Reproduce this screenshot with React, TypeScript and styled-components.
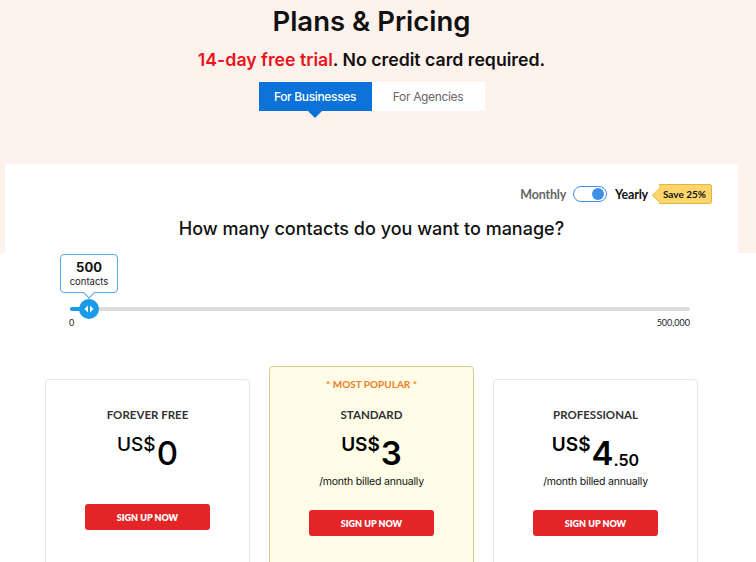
import React from 'react'
import styled, { createGlobalStyle } from 'styled-components'

const GlobalStyle = createGlobalStyle`
    body {
        margin: 0;
        background: #ffffff;
        font-family: Inter, 'Noto Sans', sans-serif;
        color: #111;
    }
`

type Plan = {
    name: string
    price: string
    cents?: string
    note?: string
    popular?: boolean
}

const plans: Plan[] = [
    { name: 'FOREVER FREE', price: '0' },
    { name: 'STANDARD', price: '3', note: '/month billed annually', popular: true },
    { name: 'PROFESSIONAL', price: '4', cents: '.50', note: '/month billed annually' },
]

const thumbX = 19

export default function App() {
    return (
        <>
            <GlobalStyle />
            <Hero>
                <Title>Plans &amp; Pricing</Title>
                <Subtitle>
                    <Red>14-day free trial</Red>. No credit card required.
                </Subtitle>
                <Tabs>
                    <Tab $active>For Businesses</Tab>
                    <Tab>For Agencies</Tab>
                </Tabs>
            </Hero>
            <Panel>
                <BillingRow>
                    <BillingLabel>Monthly</BillingLabel>
                    <Toggle>
                        <Knob />
                    </Toggle>
                    <BillingLabel $active>Yearly</BillingLabel>
                    <Badge>Save 25%</Badge>
                </BillingRow>
                <Question>How many contacts do you want to manage?</Question>
                <Slider>
                    <Bubble style={{ left: thumbX - 29 }}>
                        <BubbleValue>500</BubbleValue>
                        <BubbleUnit>contacts</BubbleUnit>
                    </Bubble>
                    <Track>
                        <Fill style={{ width: thumbX }} />
                        <Thumb style={{ left: thumbX - 10 }}>
                            <svg width="10" height="8" viewBox="0 0 10 8">
                                <path d="M4 0.5 L0.5 4 L4 7.5 Z" fill="#fff" />
                                <path d="M6 0.5 L9.5 4 L6 7.5 Z" fill="#fff" />
                            </svg>
                        </Thumb>
                    </Track>
                    <Scale>
                        <span>0</span>
                        <span>500,000</span>
                    </Scale>
                </Slider>
                <Cards>
                    {plans.map((p) => (
                        <Card key={p.name} $popular={p.popular}>
                            {p.popular && <Popular>* MOST POPULAR *</Popular>}
                            <PlanName>{p.name}</PlanName>
                            <Price $light={!p.popular && !p.cents}>
                                <Currency>US$</Currency>
                                <Amount>{p.price}</Amount>
                                {p.cents && <Cents>{p.cents}</Cents>}
                            </Price>
                            {p.note && <Note>{p.note}</Note>}
                            <SignUp $gap={p.note ? 21 : 34}>SIGN UP NOW</SignUp>
                        </Card>
                    ))}
                </Cards>
            </Panel>
        </>
    )
}

const Hero = styled.div`
    background: #fdf3ec;
    height: 253px;
    padding: 4px 13px 0 0;
    box-sizing: border-box;
    display: flex;
    flex-direction: column;
    align-items: center;
`

const Title = styled.h1`
    margin: 0;
    font-size: 27.5px;
    line-height: 34px;
    font-weight: 600;
    color: #111;
`

const Subtitle = styled.div`
    margin-top: 10px;
    font-size: 17.7px;
    line-height: 24px;
    font-weight: 600;
    color: #111;
`

const Red = styled.span`
    color: #e8141c;
`

const Tabs = styled.div`
    margin-top: 10px;
    display: flex;
`

const Tab = styled.div<{ $active?: boolean }>`
    position: relative;
    width: 113px;
    height: 29px;
    display: flex;
    align-items: center;
    justify-content: center;
    font-size: 12px;
    letter-spacing: -0.35px;
    font-weight: ${(p) => (p.$active ? 500 : 400)};
    background: ${(p) => (p.$active ? '#0a72d8' : '#ffffff')};
    color: ${(p) => (p.$active ? '#ffffff' : '#666')};

    ${(p) =>
        p.$active
            ? `&::after {
        content: '';
        position: absolute;
        left: 50%;
        bottom: -7px;
        margin-left: -7px;
        border-left: 7px solid transparent;
        border-right: 7px solid transparent;
        border-top: 7px solid #0a72d8;
    }`
            : ''}
`

const Panel = styled.div`
    margin: -89px 18px 0 5px;
    background: #ffffff;
    padding: 20px 0 0;
`

const BillingRow = styled.div`
    display: flex;
    justify-content: flex-end;
    align-items: center;
    padding-right: 26px;
    height: 20px;
    font-family: Lato, sans-serif;
`

const BillingLabel = styled.span<{ $active?: boolean }>`
    font-size: 12.5px;
    font-weight: 700;
    letter-spacing: -0.2px;
    color: ${(p) => (p.$active ? '#111' : '#666')};
`

const Toggle = styled.div`
    width: 28px;
    height: 14px;
    margin: 0 8px 0 7px;
    border: 1px solid #3f8fe0;
    border-radius: 9px;
    display: flex;
    align-items: center;
    justify-content: flex-end;
    padding: 0 2px;
`

const Knob = styled.div`
    width: 12px;
    height: 12px;
    border-radius: 50%;
    background: #3f8fe6;
`

const Badge = styled.span`
    position: relative;
    z-index: 0;
    margin-left: 11px;
    height: 18px;
    padding: 0 5px 0 4px;
    display: flex;
    align-items: center;
    font-size: 10px;
    font-weight: 700;
    color: #111;
    background: #fcd66b;
    border: 1px solid #e6b446;
    border-left: none;
    border-radius: 0 3px 3px 0;

    &::before {
        content: '';
        position: absolute;
        left: -6px;
        top: 2px;
        width: 13px;
        height: 13px;
        background: #fcd66b;
        border-left: 1px solid #e6b446;
        border-bottom: 1px solid #e6b446;
        border-radius: 0 0 0 2px;
        transform: rotate(45deg) scale(0.72, 1);
        transform-origin: center;
        z-index: -1;
    }
`

const Question = styled.h2`
    margin: 13px 0 0;
    text-align: center;
    font-size: 18px;
    line-height: 24px;
    font-weight: 500;
    color: #111;
`

const Slider = styled.div`
    position: relative;
    margin: 13px 48px 0 65px;
    padding-top: 53px;
`

const Bubble = styled.div`
    position: absolute;
    top: 0;
    width: 56px;
    height: 37px;
    border: 1px solid #5aa7dd;
    border-radius: 4px;
    background: #fff;
    display: flex;
    flex-direction: column;
    align-items: center;
    justify-content: center;

    &::after {
        content: '';
        position: absolute;
        bottom: -5px;
        left: 50%;
        margin-left: -4px;
        width: 7px;
        height: 7px;
        background: #fff;
        border-right: 1px solid #5aa7dd;
        border-bottom: 1px solid #5aa7dd;
        transform: rotate(45deg);
    }
`

const BubbleValue = styled.span`
    font-size: 13px;
    line-height: 16px;
    font-weight: 700;
`

const BubbleUnit = styled.span`
    font-size: 9.5px;
    line-height: 13px;
    color: #222;
`

const Track = styled.div`
    position: relative;
    height: 4px;
    border-radius: 2px;
    background: #dcdcdc;
`

const Fill = styled.div`
    position: absolute;
    left: 0;
    top: 0;
    height: 4px;
    border-radius: 2px;
    background: #1a9ae8;
`

const Thumb = styled.div`
    position: absolute;
    top: -8px;
    width: 20px;
    height: 20px;
    border-radius: 50%;
    background: #1a9ae8;
    display: flex;
    align-items: center;
    justify-content: center;
`

const Scale = styled.div`
    margin-top: 6px;
    margin-left: -1px;
    display: flex;
    justify-content: space-between;
    font-family: Lato, sans-serif;
    font-size: 9px;
    line-height: 11px;
    color: #222;
`

const Cards = styled.div`
    margin-top: 38px;
    display: flex;
    justify-content: center;
    align-items: flex-start;
    gap: 19px;
`

const Card = styled.div<{ $popular?: boolean }>`
    width: 205px;
    min-height: 210px;
    box-sizing: border-box;
    margin-top: ${(p) => (p.$popular ? '0' : '13px')};
    padding-top: ${(p) => (p.$popular ? '10px' : '27px')};
    background: ${(p) => (p.$popular ? '#fffde8' : '#fff')};
    border: 1px solid ${(p) => (p.$popular ? '#dccb8a' : '#e6e6e6')};
    border-radius: 4px;
    display: flex;
    flex-direction: column;
    align-items: center;
`

const Popular = styled.div`
    font-family: Lato, sans-serif;
    font-size: 10px;
    line-height: 14px;
    font-weight: 700;
    color: #f07c1c;
    margin-bottom: 16px;
`

const PlanName = styled.div`
    font-family: Lato, sans-serif;
    font-size: 11.5px;
    line-height: 16px;
    font-weight: 700;
    color: #333;
`

const Price = styled.div<{ $light?: boolean }>`
    margin-top: 12px;
    display: flex;
    align-items: flex-start;
    font-weight: ${(p) => (p.$light ? 500 : 600)};
    color: #000;
`

const Currency = styled.span`
    font-size: 19px;
    line-height: 19px;
`

const Amount = styled.span`
    font-size: 33px;
    line-height: 33px;
    margin-top: 2px;
    margin-left: 1px;
`

const Cents = styled.span`
    font-size: 16px;
    line-height: 16px;
    margin-top: 17px;
`

const Note = styled.div`
    margin-top: 5px;
    font-size: 10.5px;
    letter-spacing: -0.2px;
    line-height: 14px;
    color: #111;
`

const SignUp = styled.button<{ $gap: number }>`
    margin-top: ${(p) => p.$gap}px;
    width: 125px;
    height: 26px;
    border: none;
    border-radius: 3px;
    background: #e42527;
    color: #fff;
    font-family: Lato, sans-serif;
    font-size: 9px;
    font-weight: 800;
    cursor: pointer;
`
